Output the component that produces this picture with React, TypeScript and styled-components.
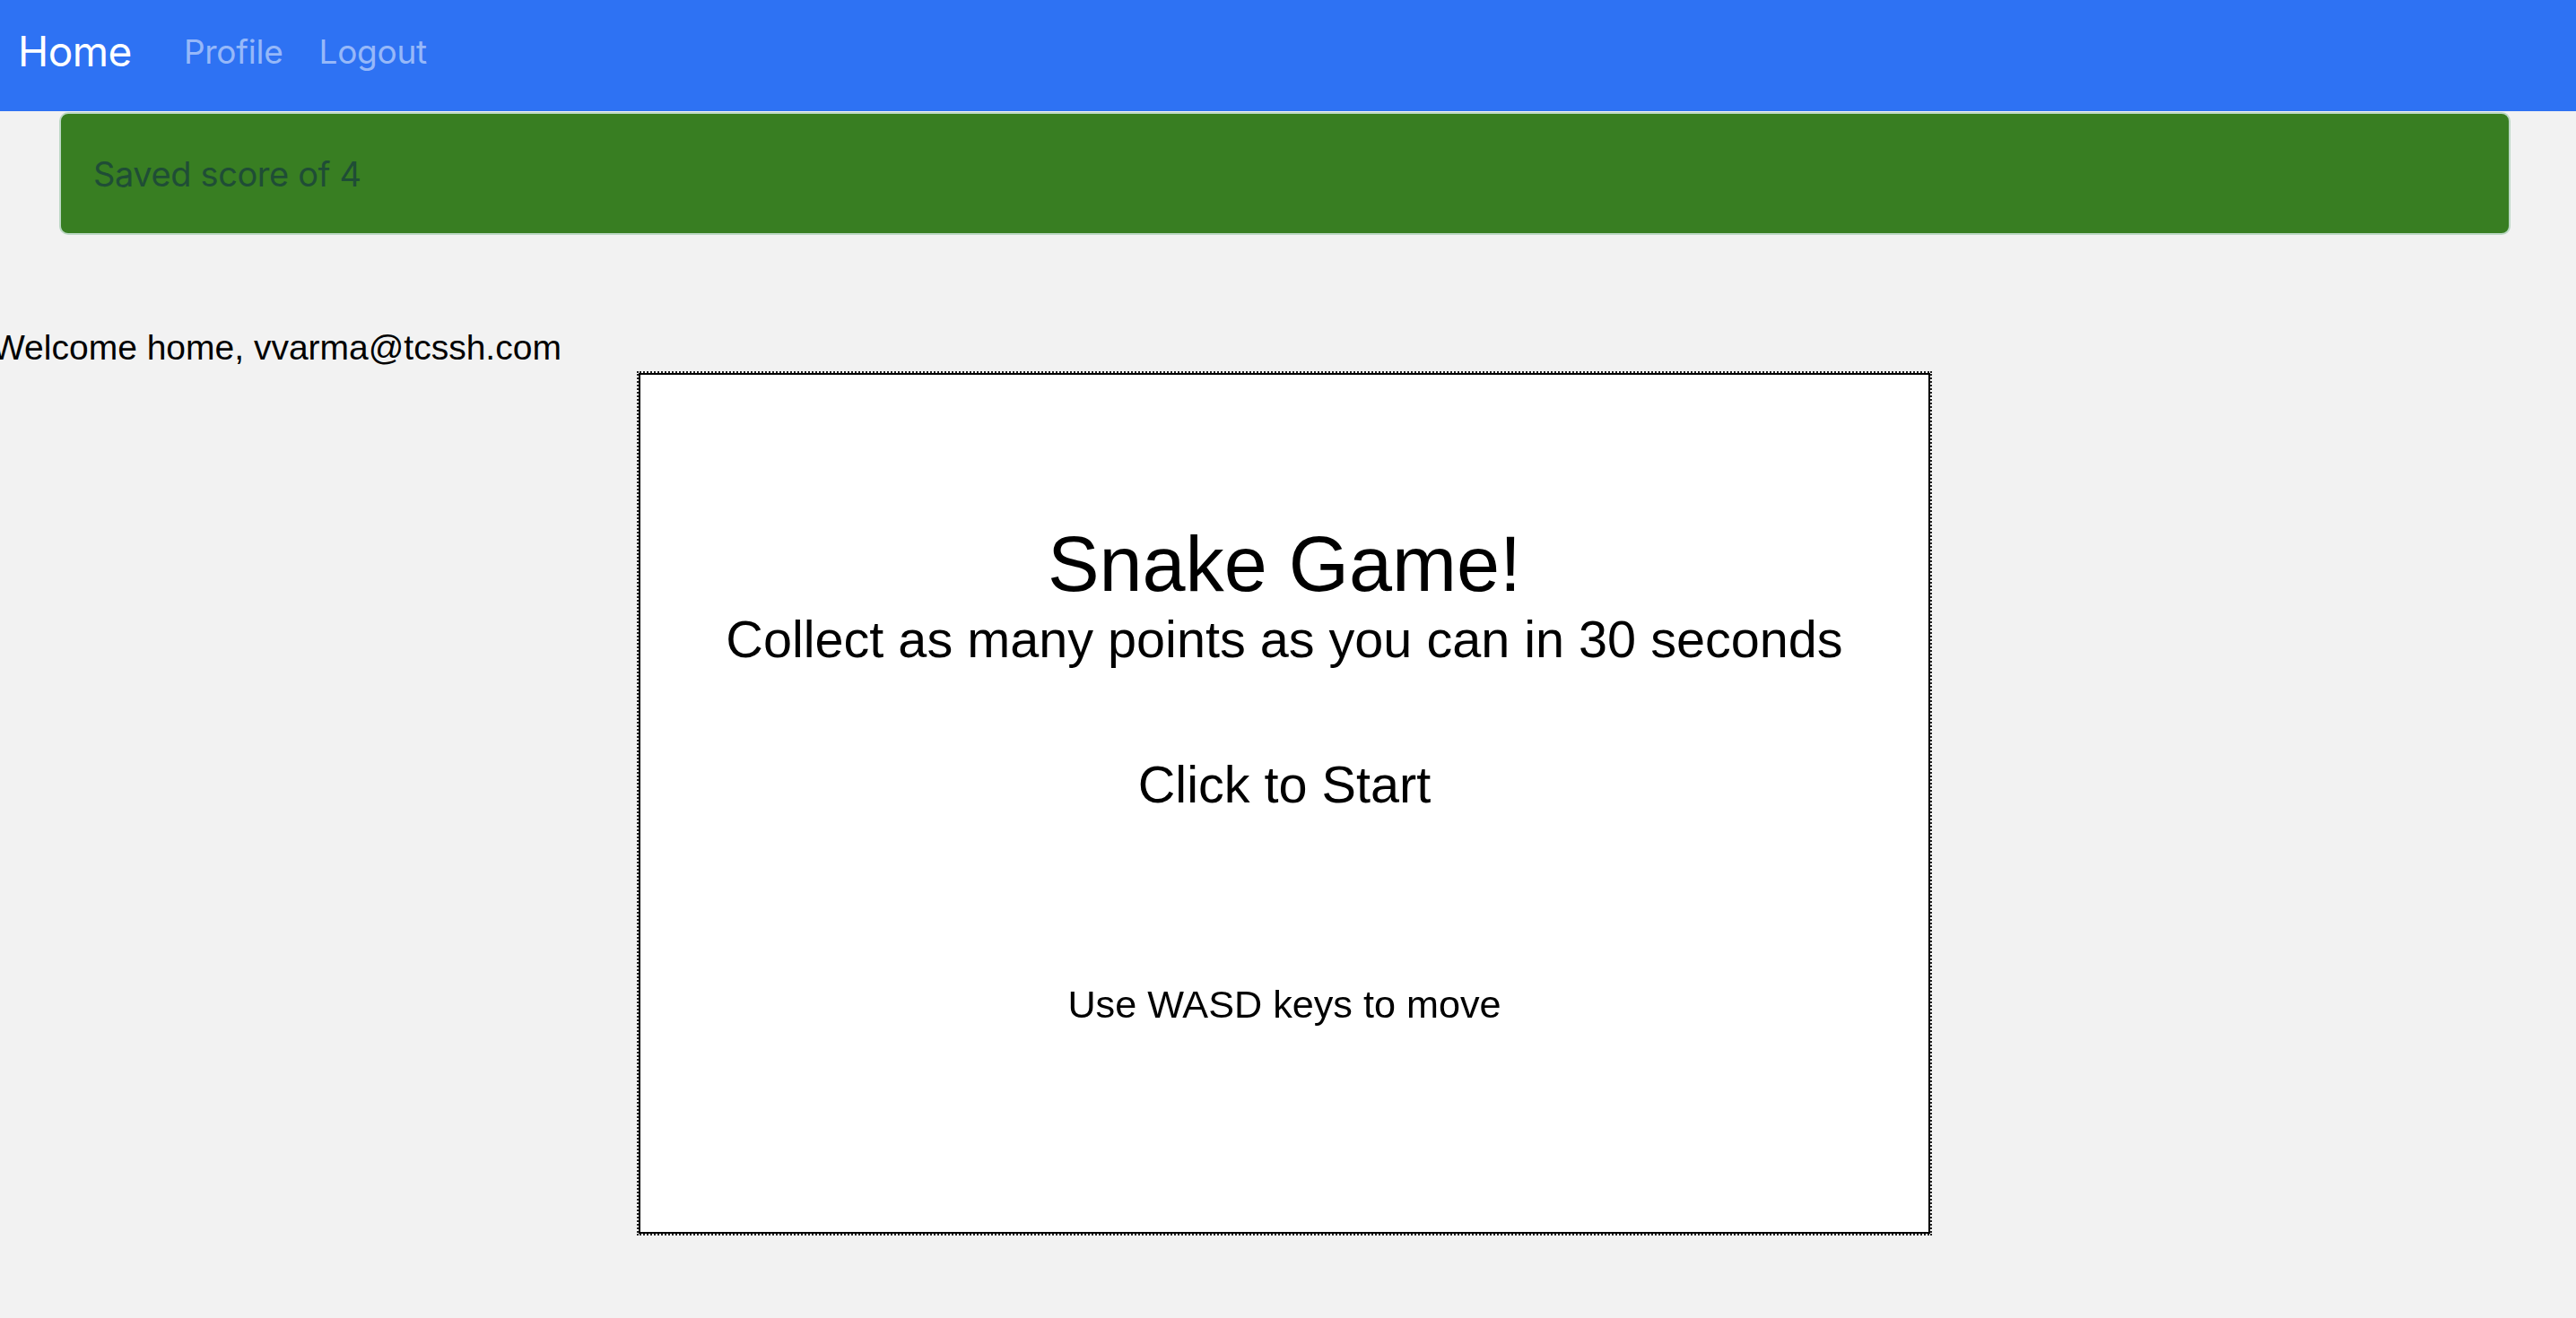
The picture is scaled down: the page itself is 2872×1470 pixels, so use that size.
import React from "react";
import styled, { createGlobalStyle } from "styled-components";

const GlobalStyle = createGlobalStyle`
  html, body {
    margin: 0;
    padding: 0;
    background: #f2f2f2;
  }
  body {
    font-family: "Liberation Sans", Arial, sans-serif;
    overflow: hidden;
  }
  * { box-sizing: border-box; }
`;

const Page = styled.div`
  width: 2872px;
  min-height: 1470px;
  background: #f2f2f2;
  display: flex;
  flex-direction: column;
`;

const NavBar = styled.nav`
  height: 124px;
  background: #2e72f3;
  display: flex;
  align-items: center;
  padding: 0 20px 8px 20px;
  font-family: Inter, "Noto Sans", sans-serif;
`;

const Brand = styled.a`
  font-size: 46px;
  line-height: 1.2;
  color: #ffffff;
  text-decoration: none;
  margin-right: 58px;
  letter-spacing: -0.5px;
`;

const NavLinks = styled.div`
  display: flex;
  align-items: center;
  gap: 40px;
`;

const NavLink = styled.a`
  font-size: 37px;
  line-height: 1.2;
  color: rgba(255, 255, 255, 0.5);
  text-decoration: none;
  letter-spacing: -0.25px;
`;

const Alert = styled.div`
  margin: 1px 73px 0 66px;
  height: 137px;
  display: flex;
  align-items: center;
  padding: 0 36px;
  background: #387e22;
  border: 2px solid #bcd8c5;
  border-radius: 10px;
  color: #1f4d36;
  font-family: Inter, "Noto Sans", sans-serif;
  font-size: 38px;
  letter-spacing: -0.4px;
`;

const Welcome = styled.p`
  margin: 103px 0 0 -9px;
  font-family: "Liberation Sans", Arial, sans-serif;
  font-size: 39px;
  line-height: 45px;
  color: #000;
  white-space: nowrap;
`;

const GameRow = styled.div`
  display: flex;
  justify-content: center;
  padding-right: 8px;
  margin-top: 4px;
`;

const GameBoard = styled.div`
  width: 1444px;
  height: 964px;
  background: #ffffff;
  border: 2px dotted #222222;
  box-shadow: inset 0 0 0 2px #000000;
  display: flex;
  flex-direction: column;
  align-items: center;
  padding-top: 170px;
  font-family: "Liberation Sans", Arial, sans-serif;
  color: #000;
`;

const GameLine = styled.div<{ $size: number; $gap: number }>`
  font-size: ${(p) => p.$size}px;
  line-height: 1;
  margin-top: ${(p) => p.$gap}px;
  white-space: nowrap;
  filter: blur(0.4px);
`;

export default function App() {
  return (
    <>
      <GlobalStyle />
      <Page>
        <NavBar>
          <Brand href="#">Home</Brand>
          <NavLinks>
            <NavLink href="#">Profile</NavLink>
            <NavLink href="#">Logout</NavLink>
          </NavLinks>
        </NavBar>
        <Alert>Saved score of 4</Alert>
        <Welcome>Welcome home, vvarma@tcssh.com</Welcome>
        <GameRow>
          <GameBoard>
            <GameLine $size={86.4} $gap={0}>Snake Game!</GameLine>
            <GameLine $size={57.6} $gap={13}>Collect as many points as you can in 30 seconds</GameLine>
            <GameLine $size={57.6} $gap={104}>Click to Start</GameLine>
            <GameLine $size={43.2} $gap={194}>Use WASD keys to move</GameLine>
          </GameBoard>
        </GameRow>
      </Page>
    </>
  );
}
